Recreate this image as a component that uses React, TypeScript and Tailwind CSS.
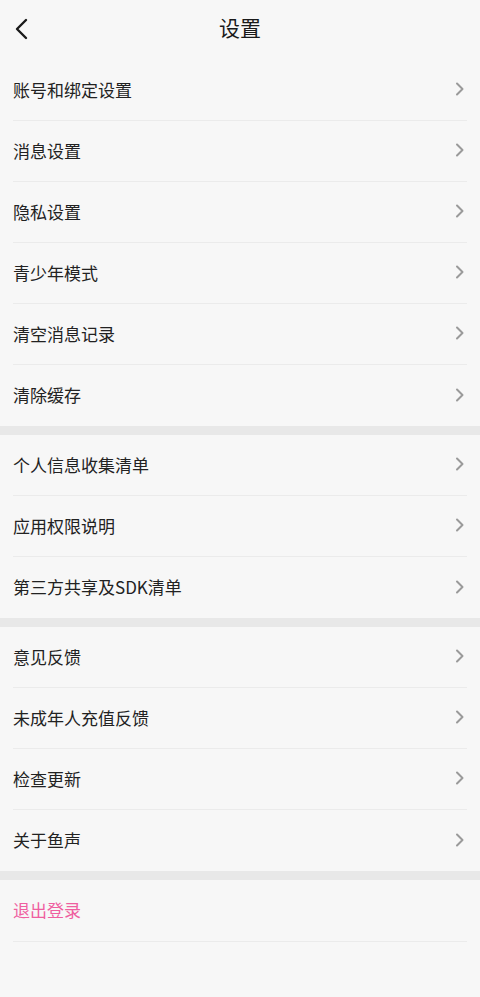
const groups = [
  ['账号和绑定设置', '消息设置', '隐私设置', '青少年模式', '清空消息记录', '清除缓存'],
  ['个人信息收集清单', '应用权限说明', '第三方共享及SDK清单'],
  ['意见反馈', '未成年人充值反馈', '检查更新', '关于鱼声'],
];

const font = { fontFamily: '"Noto Sans CJK SC", "Noto Sans", sans-serif' };

function Chevron() {
  return (
    <svg width="10" height="14" viewBox="0 0 10 14" fill="none">
      <path d="M2 1.5L7.5 7L2 12.5" stroke="#9a9a9a" strokeWidth="2" strokeLinecap="round" strokeLinejoin="round" />
    </svg>
  );
}

function Row({ label, last }: { label: string; last: boolean }) {
  return (
    <div className="h-[61px] px-[13px]">
      <div className={`h-full flex items-center justify-between pr-[2px] pb-[2px] ${last ? '' : 'border-b border-[#ebebeb]'}`}>
        <span className="text-[17px] text-[#222222] leading-none">{label}</span>
        <Chevron />
      </div>
    </div>
  );
}

export default function App() {
  return (
    <div className="w-[480px] min-h-[997px] bg-[#f7f7f7]" style={font}>
      <div className="h-[60px] flex items-center justify-center relative">
        <svg className="absolute left-[14px] top-[18px]" width="16" height="22" viewBox="0 0 16 22" fill="none">
          <path d="M12 2L3 11L12 20" stroke="#1a1a1a" strokeWidth="2.4" strokeLinecap="round" strokeLinejoin="round" />
        </svg>
        <h1 className="text-[21px] text-[#1a1a1a] font-normal -mt-[5px]">设置</h1>
      </div>

      {groups.map((items, gi) => (
        <div key={gi}>
          {items.map((label, i) => (
            <Row key={label} label={label} last={i === items.length - 1} />
          ))}
          <div className="h-[9px] bg-[#e8e8e8]" />
        </div>
      ))}

      <div className="h-[62px] px-[13px]">
        <div className="h-full flex items-center border-b border-[#ebebeb] pb-[2px]">
          <span className="text-[17px] text-[#ef5fa0] leading-none">退出登录</span>
        </div>
      </div>
    </div>
  );
}
